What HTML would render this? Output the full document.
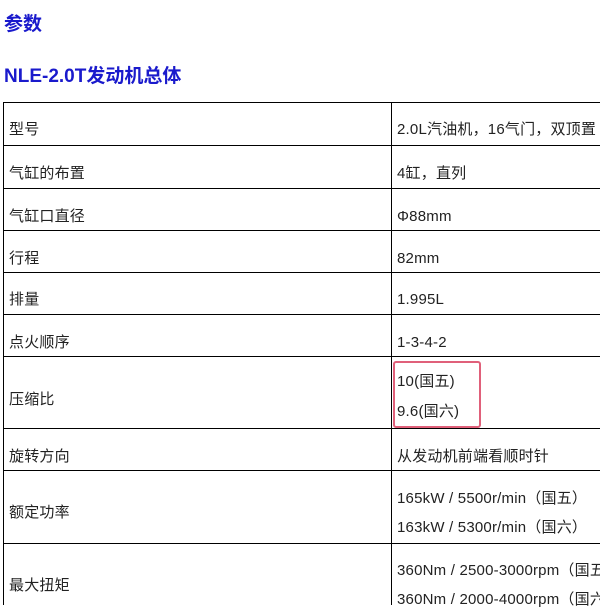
<!DOCTYPE html>
<html><head><meta charset="utf-8"><style>
body{margin:0;width:600px;height:605px;overflow:hidden;background:#fff;font-family:"Liberation Sans","Noto Sans CJK SC",sans-serif;position:relative}
.h{position:absolute;left:4px;color:#1a1acc;font-weight:bold;margin:0}
.hl{position:absolute;height:1px;background:#000;left:3px;width:600px}
.vl{position:absolute;width:1px;background:#000;top:102px;height:503px}
.t{position:absolute;font-size:15px;color:#222;line-height:20px;white-space:nowrap;letter-spacing:0.2px}
</style></head><body>
<div class="h" style="top:9px;font-size:19px">参数</div>
<div class="h" style="top:61px;font-size:19px">NLE-2.0T发动机总体</div>
<div class="vl" style="left:3px"></div>
<div class="vl" style="left:391px"></div>
<div class="hl" style="top:102px"></div>
<div class="hl" style="top:145px"></div>
<div class="hl" style="top:188px"></div>
<div class="hl" style="top:230px"></div>
<div class="hl" style="top:272px"></div>
<div class="hl" style="top:314px"></div>
<div class="hl" style="top:356px"></div>
<div class="hl" style="top:428px"></div>
<div class="hl" style="top:470px"></div>
<div class="hl" style="top:543px"></div>
<div class="t" style="left:9px;top:120px">型号</div>
<div class="t" style="left:397px;top:120px">2.0L汽油机，16气门，双顶置</div>
<div class="t" style="left:9px;top:164px">气缸的布置</div>
<div class="t" style="left:397px;top:164px">4缸，直列</div>
<div class="t" style="left:9px;top:207px">气缸口直径</div>
<div class="t" style="left:397px;top:207px">Φ88mm</div>
<div class="t" style="left:9px;top:249px">行程</div>
<div class="t" style="left:397px;top:249px">82mm</div>
<div class="t" style="left:9px;top:290px">排量</div>
<div class="t" style="left:397px;top:290px">1.995L</div>
<div class="t" style="left:9px;top:333px">点火顺序</div>
<div class="t" style="left:397px;top:333px">1-3-4-2</div>
<div class="t" style="left:9px;top:390px">压缩比</div>
<div style="position:absolute;left:393px;top:361px;width:84px;height:63px;border:2px solid #e0607a;border-radius:3px"></div>
<div class="t" style="left:397px;top:372px">10(国五)</div>
<div class="t" style="left:397px;top:402px">9.6(国六)</div>
<div class="t" style="left:9px;top:447px">旋转方向</div>
<div class="t" style="left:397px;top:447px">从发动机前端看顺时针</div>
<div class="t" style="left:9px;top:503px">额定功率</div>
<div class="t" style="left:397px;top:489px">165kW / 5500r/min（国五）</div>
<div class="t" style="left:397px;top:518px">163kW / 5300r/min（国六）</div>
<div class="t" style="left:9px;top:576px">最大扭矩</div>
<div class="t" style="left:397px;top:561px">360Nm / 2500-3000rpm（国五）</div>
<div class="t" style="left:397px;top:590px">360Nm / 2000-4000rpm（国六）</div>
</body></html>
